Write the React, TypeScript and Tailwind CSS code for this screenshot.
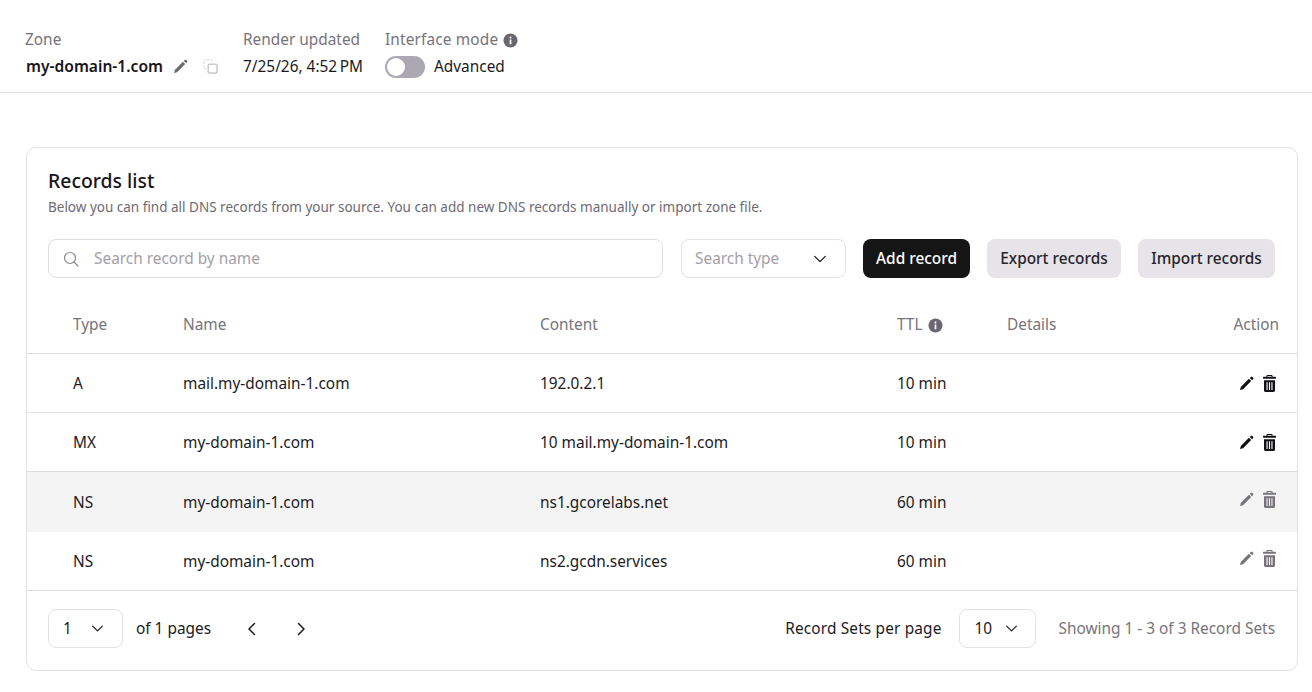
import React from "react";

const Pencil = ({ className = "" }: { className?: string }) => (
  <svg viewBox="0 0 14 14" className={className} fill="currentColor">
    <path d="M0 14l.8-3.100L8.900 2.800l2.300 2.300L3.100 13.200 0 14z" />
    <path d="M9.800 1.900l.9-.9c.5-.5 1.200-.5 1.700 0l.6.6c.5.500.5 1.200 0 1.700l-.9.9-2.300-2.300z" />
  </svg>
);

const Trash = ({ className = "" }: { className?: string }) => (
  <svg viewBox="0 0 13 17" className={className} fill="currentColor">
    <path fillRule="evenodd" d="M4.300 0h4.400c.4 0 .8.400.8.800v1h3c.3 0 .5.200.5.500v.9c0 .3-.2.500-.5.500H.5c-.3 0-.5-.2-.5-.5v-.9c0-.3.200-.5.500-.5h3v-1c0-.4.400-.8.800-.8zm.2 1v.8h4V1h-4z" />
    <path fillRule="evenodd" d="M1 5.200h11v10.400c0 .8-.6 1.400-1.400 1.400H2.400C1.600 17 1 16.400 1 15.600V5.200zm2.500 2v7.800h1.100V7.200H3.500zm2.450 0v7.800h1.100V7.200H5.950zm2.450 0v7.800h1.100V7.200H8.400z" />
  </svg>
);

const Info = ({ className = "" }: { className?: string }) => (
  <svg viewBox="0 0 16 16" className={className}>
    <circle cx="8" cy="8" r="7.500" fill="#6b6771" />
    <rect x="7.100" y="7" width="1.800" height="5" rx=".4" fill="#fff" />
    <circle cx="8" cy="4.900" r="1.100" fill="#fff" />
  </svg>
);

const Chevron = ({ dir = "down", className = "" }: { dir?: "down" | "left" | "right"; className?: string }) => (
  <svg viewBox="0 0 16 16" className={className} fill="none" stroke="currentColor" strokeWidth="1.500" strokeLinecap="round" strokeLinejoin="round">
    {dir === "down" && <path d="M2 5l6 6 6-6" />}
    {dir === "left" && <path d="M10.500 2.500L5 8l5.500 5.500" />}
    {dir === "right" && <path d="M5.500 2.500L11 8l-5.500 5.500" />}
  </svg>
);

const Copy = ({ className = "" }: { className?: string }) => (
  <svg viewBox="0 0 16 16" className={className} fill="none" strokeWidth="1">
    <rect x="5.500" y="5.500" width="9.500" height="9.500" rx="1" stroke="#a8a5ad" />
    <path d="M3 10.500H1.500a.6.6 0 0 1-.6-.6V1.500a.6.6 0 0 1 .6-.6h8a.6.6 0 0 1 .6.6V3" strokeDasharray="1.800 1.800" stroke="#c4c2c8" />
  </svg>
);

const rows = [
  { type: "A", name: "mail.my-domain-1.com", content: "192.0.2.1", ttl: "10 min", locked: false, h: "h-[59px]", bg: "", border: "border-b border-[#e4e3e6]", pt: "pt-[2px]" },
  { type: "MX", name: "my-domain-1.com", content: "10 mail.my-domain-1.com", ttl: "10 min", locked: false, h: "h-[59px]", bg: "", border: "border-b border-[#dcdbde]", pt: "pt-[2px]" },
  { type: "NS", name: "my-domain-1.com", content: "ns1.gcorelabs.net", ttl: "60 min", locked: true, h: "h-[60px]", bg: "bg-[#f4f4f4]", border: "", pt: "pt-[1px]" },
  { type: "NS", name: "my-domain-1.com", content: "ns2.gcdn.services", ttl: "60 min", locked: true, h: "h-[58px]", bg: "", border: "", pt: "pt-[2px]" },
];

const grid = "grid grid-cols-[156px_357px_357px_110px_1fr_auto] items-center pr-[18px]";

export default function App() {
  return (
    <div className="h-[692px] w-[1312px] overflow-hidden bg-white text-[15.400px] leading-[20px] text-[#1c1a1f] font-['Noto_Sans',sans-serif]">
      <header className="flex h-[93px] items-start border-b border-[#dedde0] pl-[25px] pt-[30px]">
        <div className="w-[218px]">
          <div className="text-[#77737c]">Zone</div>
          <div className="mt-[6px] flex items-center">
            <span className="ml-[1px] text-[15.600px] font-semibold text-[#17151a]">my-domain-1.com</span>
            <Pencil className="ml-[11px] h-[14px] w-[14px] text-[#6d6971]" />
            <Copy className="ml-[15px] h-[15px] w-[15px]" />
          </div>
        </div>
        <div className="w-[142px]">
          <div className="text-[#77737c]">Render updated</div>
          <div className="mt-[7px]">7/25/26, 4:52{"\u202F"}PM</div>
        </div>
        <div>
          <div className="flex items-center gap-[5px] tracking-[0.15px] text-[#77737c]">
            Interface mode <Info className="h-[15px] w-[15px]" />
          </div>
          <div className="mt-[6px] flex items-center gap-[9px]">
            <div className="flex h-[22px] w-[40px] items-center rounded-full bg-[#aca8b3] pl-[2px]">
              <div className="h-[18px] w-[18px] rounded-full bg-white" />
            </div>
            <span>Advanced</span>
          </div>
        </div>
      </header>

      <main className="ml-[26px] mt-[54px] h-[524px] w-[1272px] rounded-[10px] border border-[#e2e1e4]">
        <div className="pl-[21px] pr-[21px] pt-[20px]">
          <h2 className="text-[19.400px] font-medium leading-[26px] text-[#17151a]">Records list</h2>
          <p className="mt-[4px] text-[13.500px] leading-[18px] text-[#6e6a73]">
            Below you can find all DNS records from your source. You can add new DNS records manually or import zone file.
          </p>
          <div className="mt-[23px] flex items-start">
            <div className="flex h-[39px] w-[615px] items-center rounded-[8px] border border-[#dedde0] pl-[14px]">
              <svg viewBox="0 0 16 16" className="h-[16px] w-[16px]" fill="none" stroke="#8a868f" strokeWidth="1.200" strokeLinecap="round">
                <circle cx="7" cy="7" r="5.500" />
                <path d="M11 11l4 4" />
              </svg>
              <span className="ml-[15px] pt-[1px] text-[#a3a0a8]">Search record by name</span>
            </div>
            <div className="ml-[18px] flex h-[39px] w-[165px] items-center justify-between rounded-[8px] border border-[#e2e1e4] pl-[13px] pr-[18px]">
              <span className="text-[#a3a0a8]">Search type</span>
              <Chevron className="h-[14px] w-[14px] text-[#1c1a1f]" />
            </div>
            <button className="ml-[17px] h-[39px] w-[107px] rounded-[8px] bg-[#151515] font-medium text-white">Add record</button>
            <button className="ml-[17px] h-[39px] w-[134px] rounded-[8px] bg-[#e6e4e8] font-medium text-[#26242a]">Export records</button>
            <button className="ml-[17px] h-[39px] w-[137px] rounded-[8px] bg-[#e6e4e8] font-medium text-[#26242a]">Import records</button>
          </div>
        </div>

        <div className={`${grid} mt-[20px] h-[56px] border-b border-[#dcdbde] pb-[1px] text-[#77737c]`}>
          <div className="pl-[46px]">Type</div>
          <div>Name</div>
          <div>Content</div>
          <div className="flex items-center gap-[5px]">TTL <Info className="h-[15px] w-[15px]" /></div>
          <div>Details</div>
          <div>Action</div>
        </div>

        {rows.map((r, i) => (
          <div key={i} className={`${grid} ${r.h} ${r.bg} ${r.border}`}>
            <div className={`pl-[46px] ${r.pt}`}>{r.type}</div>
            <div className={r.pt}>{r.name}</div>
            <div className={r.pt}>{r.content}</div>
            <div className={r.pt}>{r.ttl}</div>
            <div />
            <div className={`flex items-center justify-end gap-[9px] pr-[3px] ${r.locked ? "pb-[6px] text-[#77737c]" : "text-[#121114]"}`}>
              <Pencil className="h-[14px] w-[14px]" />
              <Trash className="h-[17px] w-[13px]" />
            </div>
          </div>
        ))}

        <div className="flex h-[80px] items-center border-t border-[#dedde0] pl-[21px] pr-[22px] pb-[4px]">
          <div className="flex h-[39px] w-[75px] items-center justify-between rounded-[8px] border border-[#e2e1e4] pl-[14px] pr-[18px]">
            <span>1</span>
            <Chevron className="h-[13px] w-[13px]" />
          </div>
          <span className="ml-[13px]">of 1 pages</span>
          <Chevron dir="left" className="ml-[33px] h-[16px] w-[16px]" />
          <Chevron dir="right" className="ml-[33px] h-[16px] w-[16px]" />
          <span className="ml-auto tracking-[0.15px]">Record Sets per page</span>
          <div className="ml-[18px] flex h-[39px] w-[77px] items-center justify-between rounded-[8px] border border-[#e2e1e4] pl-[14px] pr-[17px]">
            <span>10</span>
            <Chevron className="h-[13px] w-[13px]" />
          </div>
          <span className="ml-[22px] text-[#77737c]">Showing 1 - 3 of 3 Record Sets</span>
        </div>
      </main>
    </div>
  );
}
